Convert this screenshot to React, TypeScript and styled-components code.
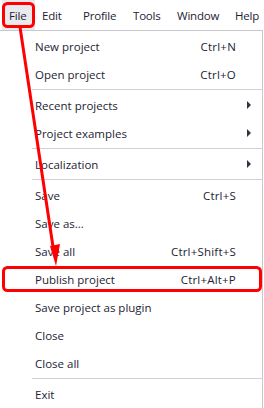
import React from 'react';
import styled, { createGlobalStyle } from 'styled-components';

const GlobalStyle = createGlobalStyle`
  html, body {
    margin: 0;
    padding: 0;
    background: #ffffff;
  }
  body {
    font-family: "Open Sans", "Noto Sans", "Liberation Sans", sans-serif;
  }
`;

type Entry =
  | { kind: 'item'; label: string; shortcut?: string; sub?: boolean }
  | { kind: 'sep' };

const entries: Entry[] = [
  { kind: 'item', label: 'New project', shortcut: 'Ctrl+N' },
  { kind: 'item', label: 'Open project', shortcut: 'Ctrl+O' },
  { kind: 'sep' },
  { kind: 'item', label: 'Recent projects', sub: true },
  { kind: 'item', label: 'Project examples', sub: true },
  { kind: 'sep' },
  { kind: 'item', label: 'Localization', sub: true },
  { kind: 'sep' },
  { kind: 'item', label: 'Save', shortcut: 'Ctrl+S' },
  { kind: 'item', label: 'Save as...' },
  { kind: 'item', label: 'Save all', shortcut: 'Ctrl+Shift+S' },
  { kind: 'item', label: 'Publish project', shortcut: 'Ctrl+Alt+P' },
  { kind: 'item', label: 'Save project as plugin' },
  { kind: 'item', label: 'Close' },
  { kind: 'item', label: 'Close all' },
  { kind: 'sep' },
  { kind: 'item', label: 'Exit' },
];

// menu bar titles with the width each one takes up in the bar
const menus: [string, number][] = [
  ['File', 33],
  ['Edit', 41],
  ['Profile', 50],
  ['Tools', 44],
  ['Window', 58],
  ['Help', 36],
];

const Frame = styled.div`
  position: relative;
  width: 264px;
  height: 408px;
  overflow: hidden;
  background: #ffffff;
  color: #1d1d33;
  font-size: 11.5px;
`;

const MenuBar = styled.div`
  display: flex;
  height: 30px;
  padding-left: 2px;
`;

const MenuTitle = styled.div<{ $open?: boolean; $w: number }>`
  display: flex;
  align-items: center;
  flex: 0 0 ${(p) => p.$w}px;
  padding-left: 7px;
  box-sizing: border-box;
  white-space: nowrap;
  background: ${(p) => (p.$open ? '#e9e9ee' : 'transparent')};
  letter-spacing: -0.2px;
`;

const Dropdown = styled.div`
  border: 1px solid #c8c8d0;
  border-left: none;
  margin-right: 1px;
  padding: 1px 0 4px;
  background: #ffffff;
`;

const Row = styled.div`
  display: flex;
  align-items: center;
  height: 28px;
  padding: 0 26px 0 35px;
  position: relative;
  white-space: nowrap;
`;

const Label = styled.span`
  flex: 1;
`;

const Shortcut = styled.span`
  letter-spacing: 0.2px;
`;

const SubArrow = styled.span`
  position: absolute;
  right: 11px;
  top: 10px;
  width: 0;
  height: 0;
  border-top: 4px solid transparent;
  border-bottom: 4px solid transparent;
  border-left: 4px solid #2f3540;
`;

const Separator = styled.div`
  height: 1px;
  margin: 1px 0 1px 32px;
  background: #d0d0da;
`;

const Annotation = styled.svg`
  position: absolute;
  left: 0;
  top: 0;
  pointer-events: none;
`;

export default function App() {
  return (
    <>
      <GlobalStyle />
      <Frame>
        <MenuBar>
          {menus.map(([m, w]) => (
            <MenuTitle key={m} $w={w} $open={m === 'File'}>
              {m}
            </MenuTitle>
          ))}
        </MenuBar>
        <Dropdown>
          {entries.map((e, i) =>
            e.kind === 'sep' ? (
              <Separator key={i} />
            ) : (
              <Row key={i}>
                <Label>{e.label}</Label>
                {e.shortcut && <Shortcut>{e.shortcut}</Shortcut>}
                {e.sub && <SubArrow />}
              </Row>
            )
          )}
        </Dropdown>
        <Annotation width={264} height={408} viewBox="0 0 264 408">
          <rect x={3.5} y={3.5} width={30} height={23} rx={4} fill="none" stroke="#f00" strokeWidth={3} />
          <rect x={3.5} y={267.5} width={257} height={23} rx={4} fill="none" stroke="#f00" strokeWidth={3} />
          <line x1={20} y1={27} x2={53.5} y2={250} stroke="#f00" strokeWidth={3} />
          <polygon points="50,246 60,244 56,266" fill="#f00" />
        </Annotation>
      </Frame>
    </>
  );
}
